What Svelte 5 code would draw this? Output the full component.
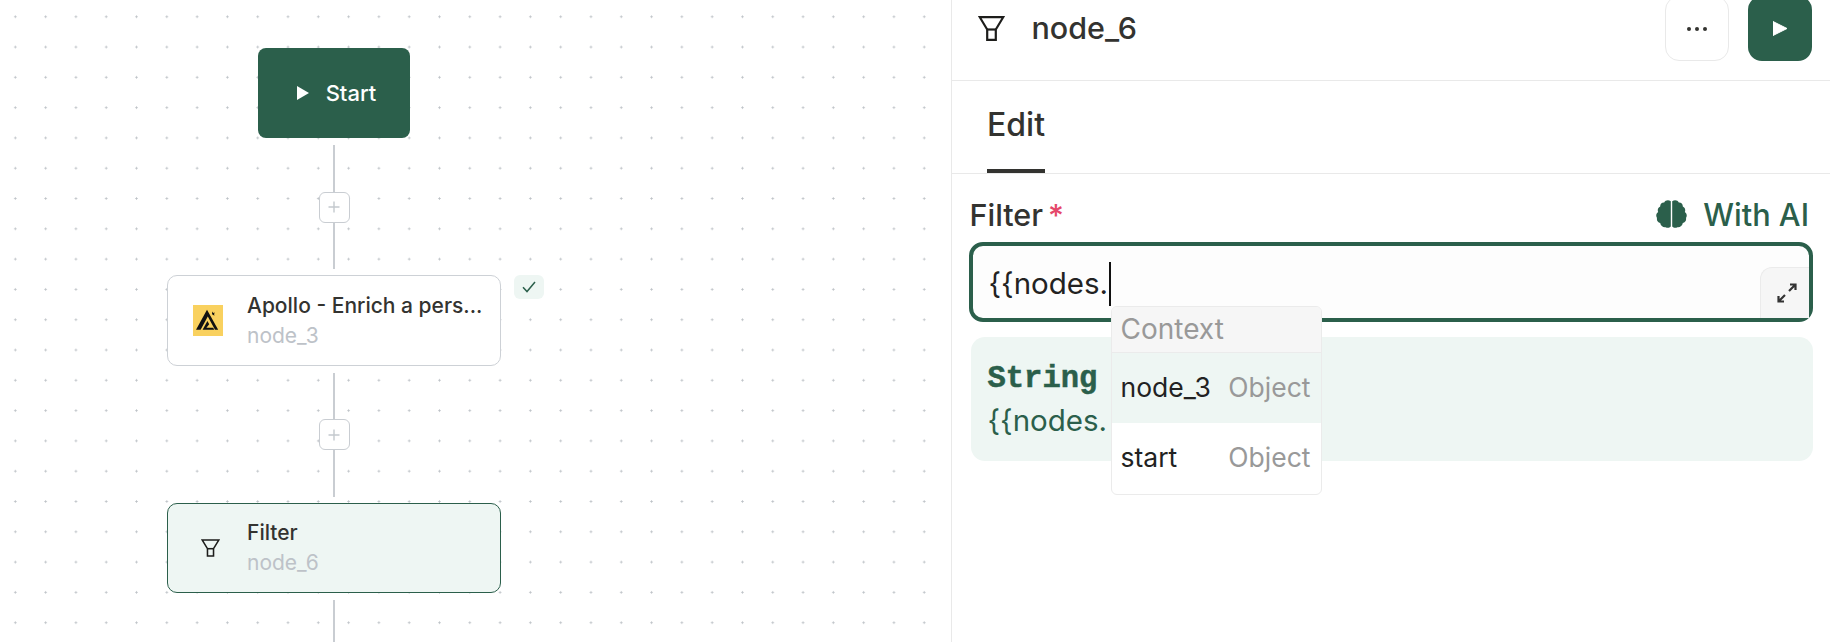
<script lang="ts">
	const contextItems = [
		{ name: 'node_3', type: 'Object', active: true },
		{ name: 'start', type: 'Object', active: false }
	];
</script>

{#snippet funnel(cls: string)}
	<svg class={cls} viewBox="0 0 27 25" fill="none" stroke="#1d1d1b" stroke-width="2.2" stroke-linejoin="miter">
		<path d="M1.8 1.2H25.2L17.8 13.5V23.8H9.2V13.5Z" />
		<path d="M9.2 13.5H17.8" />
	</svg>
{/snippet}

{#snippet connector()}
	<div class="connector">
		<span class="line top"></span>
		<button class="plus" aria-label="Add node">
			<svg viewBox="0 0 12 12" width="12" height="12" stroke="#c4c9ce" stroke-width="1.4">
				<path d="M6 .5V11.5M.5 6H11.5" />
			</svg>
		</button>
		<span class="line bottom"></span>
	</div>
{/snippet}

<div class="page">
	<section class="canvas">
		<div class="flow">
			<div class="start-node">
				<svg viewBox="0 0 12 14" width="12" height="14"><path d="M0 0L12 7L0 14Z" fill="#fff" /></svg>
				<span>Start</span>
			</div>
			{@render connector()}
			<div class="node">
				<div class="node-icon">
					<svg class="apollo" viewBox="0 0 30 31">
						<rect width="30" height="31" fill="#f9d15f" />
						<path d="M14 4.8L3 24.8H7.6L14.8 11.4L22 24.8H25.2Z" fill="#111" />
						<path d="M9.6 24.8L14.4 16L16.2 19.2L13.4 22.8H20.2L21.2 24.8Z" fill="#111" />
						<path d="M19.4 6.6L20.4 8L22 7.6L21 9L21.6 10.4L20 10L19 9Z" fill="#111" />
					</svg>
				</div>
				<div class="node-text">
					<div class="node-title">Apollo - Enrich a pers...</div>
					<div class="node-id">node_3</div>
				</div>
				<div class="status">
					<svg viewBox="0 0 14 12" width="14" height="12" fill="none" stroke="#2b5f4b" stroke-width="1.5">
						<path d="M1 6.2L5 10.5L13 1" />
					</svg>
				</div>
			</div>
			{@render connector()}
			<div class="node selected">
				<div class="node-icon">{@render funnel('funnel-small')}</div>
				<div class="node-text">
					<div class="node-title">Filter</div>
					<div class="node-id">node_6</div>
				</div>
			</div>
			<div class="connector tail"><span class="line"></span></div>
		</div>
	</section>

	<section class="panel">
		<header class="panel-head">
			{@render funnel('funnel-large')}
			<h1>node_6</h1>
			<div class="actions">
				<button class="icon-btn more" aria-label="More">
					<i></i><i></i><i></i>
				</button>
				<button class="icon-btn run" aria-label="Run">
					<svg viewBox="0 0 14 14" width="14" height="15"><path d="M0 0L14 7L0 14Z" fill="#fff" stroke="#fff" stroke-linejoin="round" /></svg>
				</button>
			</div>
		</header>

		<nav class="tabs">
			<span class="tab">Edit</span>
		</nav>

		<div class="form">
			<div class="label-row">
				<label for="filter">Filter<span class="req">*</span></label>
				<span class="with-ai">
					<svg viewBox="0 0 31 28" width="31" height="28" fill="#2b5f4b">
						<path d="M14.8 1.2C12.4-.4 9.2.2 8.2 2.6 5.8 2.4 4 4.2 4.2 6.6 2 7.6 1.2 10 2.2 12 .2 13.4-.4 16 1 18c-.6 2.4.8 4.6 3.2 5 .4 2.6 2.8 4.6 5.4 4.2 1.8 1 4 .6 5.2-.8Z" />
						<path d="M16.2 1.2C18.6-.4 21.8.2 22.8 2.6 25.2 2.4 27 4.2 26.8 6.6 29 7.6 29.8 10 28.8 12 30.8 13.4 31.4 16 30 18c.6 2.4-.8 4.6-3.2 5-.4 2.6-2.8 4.6-5.4 4.2-1.8 1-4 .6-5.2-.8Z" />
					</svg>
					With AI
				</span>
			</div>

			<div class="input-wrap">
				<div class="input" id="filter">{'{{nodes.'}<span class="caret"></span></div>
				<button class="expand" aria-label="Expand">
					<svg viewBox="0 0 20 20" width="20" height="20" fill="none" stroke="#333" stroke-width="2.2">
						<path d="M12 8L18 2M13 1.5H18.5V7" />
						<path d="M8 12L2 18M7 18.5H1.5V13" />
					</svg>
				</button>
				<div class="menu">
					<div class="menu-head">Context</div>
					{#each contextItems as item}
						<div class="menu-row" class:active={item.active}>
							<span>{item.name}</span>
							<span class="type">{item.type}</span>
						</div>
					{/each}
				</div>
			</div>

			<div class="preview">
				<div class="preview-type">String</div>
				<div class="preview-value">{'{{nodes.'}</div>
			</div>
		</div>
	</section>
</div>

<style>
	:global(body) {
		margin: 0;
		background: #fff;
	}

	.page {
		display: grid;
		grid-template-columns: 951px 1fr;
		width: 1830px;
		height: 642px;
		overflow: hidden;
		font-family: Inter, 'Liberation Sans', sans-serif;
		color: #333330;
	}

	.canvas {
		background-color: #fff;
		background-image: radial-gradient(circle, #bcc1c6 0.9px, transparent 1.2px);
		background-size: 30.3px 30.3px;
		background-position: 0.2px 1.6px;
		overflow: hidden;
	}

	.flow {
		display: flex;
		flex-direction: column;
		align-items: center;
		width: 334px;
		margin-left: 167px;
		padding-top: 48px;
	}

	.start-node {
		display: flex;
		align-items: center;
		justify-content: center;
		gap: 17px;
		width: 152px;
		height: 90px;
		flex: none;
		box-sizing: border-box;
		padding-left: 5px;
		border-radius: 8px;
		background: #2b5f4b;
		color: #fff;
		font-size: 22px;
		font-weight: 500;
	}

	.connector {
		display: flex;
		flex-direction: column;
		align-items: center;
		height: 137px;
		padding: 7px 0 6px;
		box-sizing: border-box;
		flex: none;
	}

	.connector.tail {
		height: 60px;
		padding-bottom: 0;
	}

	.line {
		display: block;
		width: 2px;
		background: #c9cdd2;
		flex: 1;
	}

	.plus {
		display: flex;
		align-items: center;
		justify-content: center;
		width: 31px;
		height: 31px;
		padding: 0;
		flex: none;
		border: 1.5px solid #c9cdd2;
		border-radius: 6px;
		background: #fff;
	}

	.node {
		position: relative;
		display: flex;
		align-items: center;
		width: 334px;
		height: 90.5px;
		flex: none;
		box-sizing: border-box;
		padding-left: 25px;
		border: 1.5px solid #cdd1d6;
		border-radius: 10px;
		background: #fff;
	}

	.node.selected {
		border-color: #2b5f4b;
		background: #eef6f3;
	}

	.node-icon {
		display: flex;
		align-items: center;
		justify-content: center;
		width: 30px;
		margin-right: 24px;
	}

	.node-text {
		padding-top: 1px;
	}

	.apollo {
		display: block;
		width: 30px;
		height: 31px;
	}

	.funnel-small {
		width: 19px;
		height: 18px;
		margin-left: 4px;
	}

	.funnel-large {
		width: 27px;
		height: 25px;
		margin-top: 16px;
		flex: none;
	}

	.node-title {
		font-size: 21px;
		font-weight: 500;
		line-height: 29px;
		white-space: nowrap;
	}

	.node-id {
		font-size: 21px;
		line-height: 31px;
		color: #bdc2c8;
	}

	.status {
		position: absolute;
		top: -1.5px;
		left: 346px;
		display: flex;
		align-items: center;
		justify-content: center;
		width: 30px;
		height: 24px;
		border-radius: 6px;
		background: #eef6f3;
	}

	.panel {
		min-width: 0;
		border-left: 1.5px solid #e9e9e9;
		display: flex;
		flex-direction: column;
		background: #fff;
	}

	.panel-head {
		display: flex;
		align-items: flex-start;
		height: 81px;
		flex: none;
		box-sizing: border-box;
		padding: 0 18.5px 0 25.5px;
		border-bottom: 1.5px solid #e9e9e9;
	}

	h1 {
		margin: 9px 0 0 27px;
		font-size: 30.5px;
		font-weight: 500;
		line-height: 38px;
	}

	.actions {
		display: flex;
		gap: 19px;
		margin-left: auto;
		margin-top: -4px;
	}

	.icon-btn {
		display: flex;
		align-items: center;
		justify-content: center;
		width: 64px;
		height: 65px;
		padding: 0;
		box-sizing: border-box;
		border-radius: 14px;
	}

	.more {
		gap: 4px;
		border: 1.5px solid #e9e9e9;
		background: #fff;
	}

	.more i {
		width: 4px;
		height: 4px;
		border-radius: 50%;
		background: #333330;
	}

	.run {
		border: 0;
		background: #2b5f4b;
	}

	.tabs {
		display: flex;
		height: 93px;
		flex: none;
		box-sizing: border-box;
		padding-left: 35px;
		border-bottom: 1.5px solid #e9e9e9;
	}

	.tab {
		height: 88px;
		line-height: 88px;
		font-size: 32px;
		font-weight: 500;
		border-bottom: 4px solid #333330;
	}

	.form {
		padding: 0 17px 0 16.5px;
	}

	.label-row {
		display: flex;
		align-items: center;
		justify-content: space-between;
		height: 68px;
		padding: 12px 4px 0 1px;
		font-size: 30.5px;
		font-weight: 500;
		box-sizing: border-box;
	}

	.req {
		margin-left: 5px;
		color: #e5486a;
	}

	.with-ai {
		display: flex;
		align-items: center;
		gap: 16px;
		color: #2b5f4b;
		font-size: 30.7px;
	}

	.input-wrap {
		position: relative;
	}

	.input {
		height: 80px;
		box-sizing: border-box;
		padding: 0 16px;
		border: 4px solid #2b5f4b;
		border-radius: 14px;
		background: #fdfdfd;
		font-size: 29.5px;
		line-height: 74px;
		color: #222;
	}

	.caret {
		display: inline-block;
		width: 2px;
		height: 44px;
		margin-left: 1px;
		vertical-align: -12px;
		background: #111;
	}

	.expand {
		position: absolute;
		right: 4px;
		bottom: 4px;
		display: flex;
		align-items: center;
		justify-content: center;
		width: 49px;
		height: 51px;
		padding: 0 0 0 3px;
		box-sizing: border-box;
		border: solid #ebebeb;
		border-width: 1.5px 0 0 1.5px;
		border-radius: 12px 0 0 0;
		background: #f6f6f6;
	}

	.menu {
		position: absolute;
		top: 63.5px;
		left: 142px;
		z-index: 2;
		width: 211px;
		box-sizing: border-box;
		border: 1.5px solid #ebebeb;
		border-radius: 6px;
		background: #fff;
		overflow: hidden;
		font-size: 26.5px;
	}

	.menu-head {
		height: 46px;
		box-sizing: border-box;
		padding-left: 9px;
		line-height: 44px;
		color: #999;
		background: #f6f6f6;
		border-bottom: 1.5px solid #ebebeb;
		font-size: 28px;
	}

	.menu-row {
		display: flex;
		justify-content: space-between;
		align-items: center;
		height: 70.5px;
		padding: 0 10px 2px 9px;
		box-sizing: border-box;
		color: #222;
	}

	.menu-row.active {
		background: #eef6f3;
	}

	.type {
		color: #999;
	}

	.preview {
		margin-top: 15px;
		margin-left: 2px;
		height: 124px;
		box-sizing: border-box;
		padding: 23px 17px 0;
		border-radius: 14px;
		background: #eef6f3;
		color: #2b5f4b;
	}

	.preview-type {
		font-family: 'Liberation Mono', monospace;
		font-size: 30.5px;
		font-weight: 700;
		line-height: 38px;
		-webkit-text-stroke: 0.5px #2b5f4b;
	}

	.preview-value {
		font-size: 29.5px;
		line-height: 44px;
	}
</style>
